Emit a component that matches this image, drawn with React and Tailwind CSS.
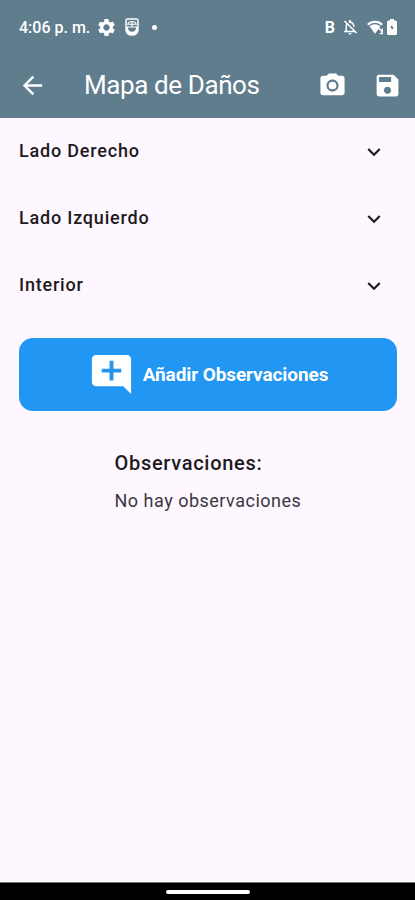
import {
  MdAddComment,
  MdArrowBack,
  MdCameraAlt,
  MdExpandMore,
  MdOutlineNotificationsOff,
  MdSave,
  MdSettings,
} from "react-icons/md";

const SECTIONS = ["Lado Derecho", "Lado Izquierdo", "Interior"];

const MouseIcon = () => (
  <svg className="w-[14px] h-[18px]" viewBox="0 0 14 18" fill="none">
    <path
      d="M1 2.500C1 1.500 1.500 1 2.500 1h9c1 0 1.500.5 1.500 1.500v9.500c0 3-2.500 5-6 5S1 15 1 12z"
      stroke="white"
      strokeWidth="1.500"
    />
    <path
      d="M1 9h12M3 6C3.500 2.600 10.500 2.600 11 6M7 3v5.500M2 6.300h10"
      stroke="white"
      strokeWidth="1.100"
    />
    <path
      d="M1.500 9v3c0 3 2 4.500 5.500 4.500s5.500-1.500 5.500-4.500V9h-1.500c.2 3-1.200 4.800-4 4.800S2.800 12 3 9z"
      fill="white"
    />
  </svg>
);

const WifiIcon = () => (
  <svg className="w-[17px] h-[15px]" viewBox="0 0 17 15" fill="none">
    <path d="M.8 4.800C4.800.8 11.200.8 15.200 4.800" stroke="white" strokeWidth="2" />
    <path
      d="M2.500 6.300C5.700 3.600 10.300 3.600 13.500 6.300L8 13.800z"
      fill="white"
    />
    <path d="M11.500 8l3.500 3.500M15.300 8.500v5h-2.500" stroke="white" strokeWidth="1.400" />
  </svg>
);

const BatteryIcon = () => (
  <svg className="w-[10px] h-[16px]" viewBox="0 0 10 16">
    <path
      d="M3 0h4v1.500h1.500A1.500 1.500 0 0 1 10 3v11.500A1.500 1.500 0 0 1 8.500 16h-7A1.500 1.500 0 0 1 0 14.500V3a1.500 1.500 0 0 1 1.500-1.500H3z"
      fill="white"
    />
    <path d="M5.300 5.300L3.200 9h1.500v2.300L6.900 8H5.300z" fill="#607d8e" />
  </svg>
);

const StatusBar = () => (
  <div className="h-[54px] pl-[19px] pr-[18px] flex items-center justify-between">
    <div className="flex items-center">
      <span className="w-[77px] pt-[2px] text-[16px] font-medium whitespace-nowrap">
        4:06 p. m.
      </span>
      <MdSettings className="w-[21px] h-[21px]" />
      <span className="ml-[8px]">
        <MouseIcon />
      </span>
      <span className="ml-[13px] w-[5px] h-[5px] rounded-full bg-white" />
    </div>
    <div className="flex items-center">
      <span className="pt-px text-[16px] leading-none font-bold">B</span>
      <MdOutlineNotificationsOff className="ml-[6px] w-[18px] h-[18px]" />
      <span className="ml-[8px]">
        <WifiIcon />
      </span>
      <span className="ml-[3px]">
        <BatteryIcon />
      </span>
    </div>
  </div>
);

const AppBar = () => (
  <div className="h-[63px] pl-[18px] pr-[13px] flex items-center">
    <button>
      <MdArrowBack className="w-[29px] h-[29px]" />
    </button>
    <h1 className="ml-[37px] pb-px flex-1 text-[26px] leading-none tracking-[-0.4px] whitespace-nowrap">
      Mapa de Daños
    </h1>
    <button>
      <MdCameraAlt className="w-[29px] h-[29px]" />
    </button>
    <button className="ml-[26px]">
      <MdSave className="w-[29px] h-[29px]" />
    </button>
  </div>
);

const App = () => {
  return (
    <div className="w-full h-screen flex flex-col overflow-hidden bg-[#fef7ff] text-[#1d1b20] font-[Roboto,sans-serif]">
      <header className="h-[118px] shrink-0 bg-[#607d8e] text-white">
        <StatusBar />
        <AppBar />
      </header>

      <main className="flex-1 flex flex-col">
        {/* Secciones */}
        {SECTIONS.map((name) => (
          <button
            key={name}
            className="h-[67px] pl-[19px] pr-[28px] flex items-center justify-between"
          >
            <span className="pb-[2px] text-[18px] font-medium tracking-[0.8px]">
              {name}
            </span>
            <MdExpandMore className="w-[26px] h-[26px]" />
          </button>
        ))}

        <button className="mt-[19px] ml-[19px] mr-[18px] h-[73px] rounded-[14px] bg-[#2196f3] text-white flex items-center justify-center">
          <MdAddComment className="w-[47px] h-[47px]" />
          <span className="ml-[8px] pt-[2px] text-[19px] font-bold tracking-[-0.1px] whitespace-nowrap">
            Añadir Observaciones
          </span>
        </button>

        {/* Observaciones */}
        <div className="mt-[38px] w-[186px] mx-auto">
          <h2 className="text-[20px] leading-[28px] font-medium tracking-[0.7px]">
            Observaciones:
          </h2>
          <p className="mt-[11px] text-[18px] leading-[26px] tracking-[0.5px] whitespace-nowrap text-[#3a373d]">
            No hay observaciones
          </p>
        </div>
      </main>

      <footer className="h-[18px] shrink-0 bg-black border-t border-[#777] flex items-center justify-center">
        <span className="w-[84px] h-[4px] rounded-full bg-white" />
      </footer>
    </div>
  );
};

export default App;
